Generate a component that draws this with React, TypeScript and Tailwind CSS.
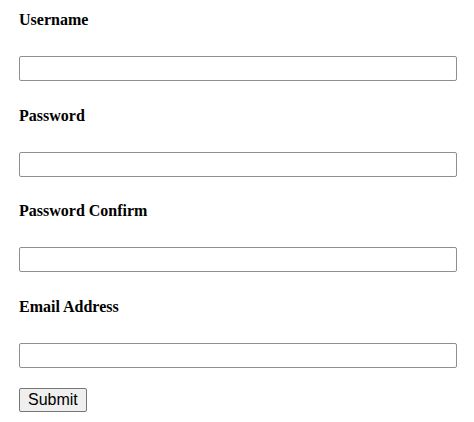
const fields = ['Username', 'Password', 'Password Confirm', 'Email Address'];

export default function App() {
  return (
    <div className="min-h-screen bg-white px-[19px] pt-[11px]">
      <form className="flex flex-col" onSubmit={(e) => e.preventDefault()}>
        {fields.map((name, i) => (
          <div key={name} className={i > 0 ? 'mt-[25.5px]' : ''}>
            <label className="block text-[16px] leading-[18px] font-bold text-black [font-family:'Liberation_Serif',serif]">
              {name}
            </label>
            <input
              type={name.startsWith('Password') ? 'password' : name.startsWith('Email') ? 'email' : 'text'}
              className="mt-[27px] block h-[25px] w-[438px] rounded-[2px] border border-[#8f8f8f] bg-white px-1 outline-none"
            />
          </div>
        ))}
        <div className="mt-[19.5px]">
          <button
            type="submit"
            className="h-[24px] rounded-[2px] border border-[#767676] bg-[#efefef] px-[8px] text-[16px] leading-[18px] text-black [font-family:'Liberation_Sans',Arial,sans-serif]"
          >
            Submit
          </button>
        </div>
      </form>
    </div>
  );
}
